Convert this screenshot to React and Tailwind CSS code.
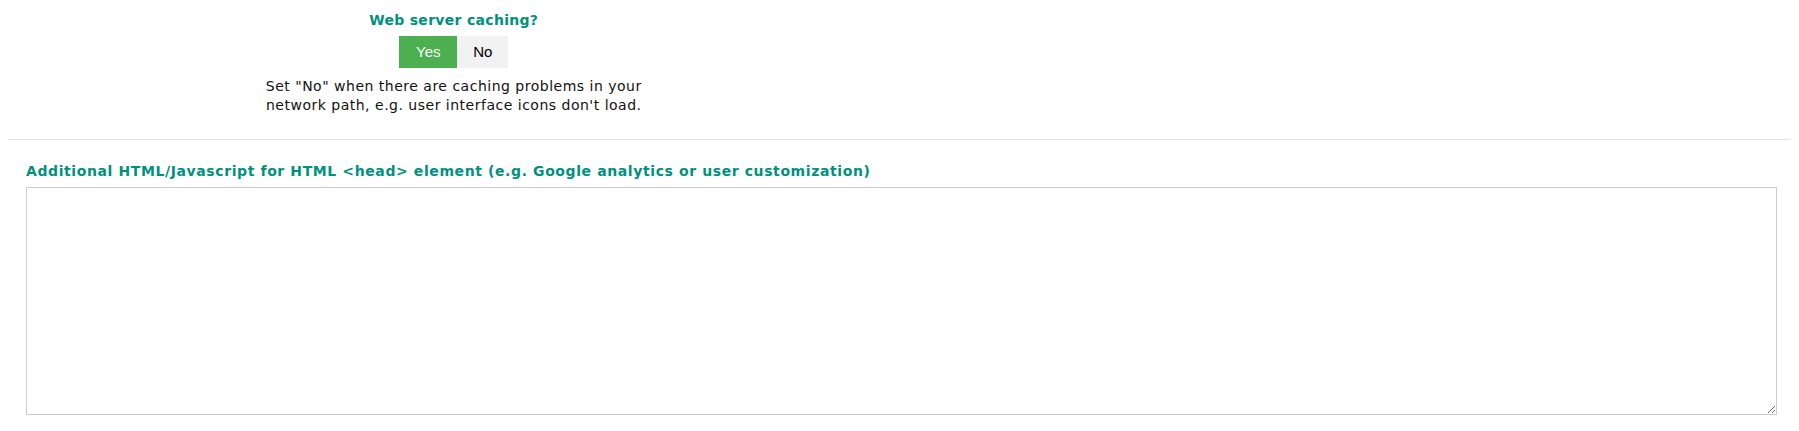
import { useState } from 'react'

const font = { fontFamily: '"DejaVu Sans", Verdana, sans-serif' }

export default function App() {
  const [cache, setCache] = useState(true)

  return (
    <div className="bg-white text-black px-2" style={font}>
      {/* web server caching */}
      <div className="grid grid-cols-2">
        <div className="flex flex-col items-center pt-[11px] pb-[24px]">
          <h3 className="text-[14px] font-bold text-[#00917c] leading-[18px] tracking-[0.3px]">Web server caching?</h3>
          <div className="flex mt-[7px] h-[32px] text-[15px]" style={{ fontFamily: '"Liberation Sans", Arial, sans-serif' }}>
            <button
              onClick={() => setCache(true)}
              className={`w-[58px] ${cache ? 'bg-[#4caf50] text-white' : 'bg-[#f2f2f2] text-black'}`}
            >
              Yes
            </button>
            <button
              onClick={() => setCache(false)}
              className={`w-[51px] ${!cache ? 'bg-[#4caf50] text-white' : 'bg-[#f2f2f2] text-black'}`}
            >
              No
            </button>
          </div>
          <p className="mt-[9px] w-[400px] text-center text-[14px] leading-[19px] tracking-[0.5px] text-[#111]">
            Set "No" when there are caching problems in your network path, e.g. user interface icons don't load.
          </p>
        </div>
      </div>

      <hr className="border-t border-[#e3e3e3]" />

      {/* custom head html */}
      <div className="pl-[18px] pr-[14px] pt-[22px] pb-4">
        <label className="block text-[14px] font-bold text-[#00917c] leading-[18px] tracking-[0.6px]">
          Additional HTML/Javascript for HTML &lt;head&gt; element (e.g. Google analytics or user customization)
        </label>
        <textarea className="block w-full h-[228px] mt-[7px] border border-[#cccccc] outline-none p-1 text-[13px]" />
      </div>
    </div>
  )
}
